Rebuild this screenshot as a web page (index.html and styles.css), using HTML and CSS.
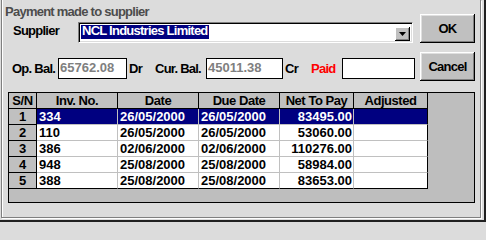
FILE: index.html
```html
<!DOCTYPE html>
<html>
<head>
<meta charset="utf-8">
<link rel="stylesheet" href="styles.css">
</head>
<body>
<div class="outer">
  <div class="frame">
    <div class="top">
      <div class="fields">
        <div class="title">Payment made to supplier</div>
        <div class="sup-row">
          <div class="lbl sup-lbl">Supplier</div>
          <div class="combo">
            <span class="sel">NCL Industries Limited</span>
            <span class="drop"><svg width="7" height="4" viewBox="0 0 7 4"><polygon points="0,0 7,0 3.5,4" fill="#000"/></svg></span>
          </div>
        </div>
        <div class="bal-row">
          <div class="lbl w-op">Op. Bal.</div>
          <div class="box w-b1">65762.08</div>
          <div class="lbl w-dr">Dr</div>
          <div class="lbl w-cur">Cur. Bal.</div>
          <div class="box w-b2">45011.38</div>
          <div class="lbl w-cr">Cr</div>
          <div class="lbl w-paid">Paid</div>
          <div class="box w-b3"></div>
        </div>
      </div>
      <div class="buttons">
        <div class="btn">OK</div>
        <div class="btn">Cancel</div>
      </div>
    </div>
    <div class="grid">
      <div class="table">
        <div class="hd">S/N</div>
        <div class="hd">Inv. No.</div>
        <div class="hd">Date</div>
        <div class="hd">Due Date</div>
        <div class="hd">Net To Pay</div>
        <div class="hd last">Adjusted</div>

        <div class="sn">1</div>
        <div class="c sel-row">334</div>
        <div class="c sel-row">26/05/2000</div>
        <div class="c sel-row">26/05/2000</div>
        <div class="c num sel-row">83495.00</div>
        <div class="c last sel-row"></div>

        <div class="sn">2</div>
        <div class="c">110</div>
        <div class="c">26/05/2000</div>
        <div class="c">26/05/2000</div>
        <div class="c num">53060.00</div>
        <div class="c last"></div>

        <div class="sn">3</div>
        <div class="c">386</div>
        <div class="c">02/06/2000</div>
        <div class="c">02/06/2000</div>
        <div class="c num">110276.00</div>
        <div class="c last"></div>

        <div class="sn">4</div>
        <div class="c">948</div>
        <div class="c">25/08/2000</div>
        <div class="c">25/08/2000</div>
        <div class="c num">58984.00</div>
        <div class="c last"></div>

        <div class="sn bot">5</div>
        <div class="c bot">388</div>
        <div class="c bot">25/08/2000</div>
        <div class="c bot">25/08/2000</div>
        <div class="c num bot">83653.00</div>
        <div class="c last bot"></div>
      </div>
    </div>
  </div>
</div>
</body>
</html>
```

FILE: styles.css
```css
html, body {
  margin: 0;
  padding: 0;
}
body {
  width: 486px;
  height: 223px;
  overflow: hidden;
  background: #dcdcdc;
  font-family: "Liberation Sans", Arial, sans-serif;
  font-size: 13px;
  font-weight: bold;
  line-height: 15px;
  color: #000;
}
.outer {
  width: 484px;
  height: 220px;
  border-right: 2px solid #202020;
  border-bottom: 2px solid #202020;
}
.frame {
  margin-left: 1px;
  width: 478px;
  height: 217px;
  border-left: 1px solid #808080;
  border-right: 1px solid #808080;
  border-bottom: 1px solid #808080;
  box-shadow: inset 1px 0 #fff, 1px 1px #fff;
}
.top {
  display: flex;
  align-items: flex-start;
}
.fields {
  width: 418px;
}
.title {
  margin-top: 4px;
  padding-left: 3px;
  color: #4c4c4c;
  letter-spacing: -0.75px;
}
.sup-row {
  display: flex;
  margin-top: 3px;
  padding-left: 11px;
}
.lbl {
  letter-spacing: -0.75px;
  white-space: nowrap;
}
.sup-lbl {
  width: 65px;
  margin-top: 1px;
}
.combo {
  box-sizing: border-box;
  width: 335px;
  height: 21px;
  padding: 1px;
  display: flex;
  justify-content: space-between;
  background: #fff;
  border-top: 1px solid #808080;
  border-left: 1px solid #808080;
  border-right: 1px solid #fff;
  border-bottom: 1px solid #fff;
  box-shadow: inset 1px 1px #000, inset -1px -1px #dcdcdc;
}
.sel {
  margin: 1px 0 0 1px;
  height: 14px;
  line-height: 12px;
  padding: 0 1px;
  background: #000080;
  color: #fff;
  letter-spacing: -0.75px;
  white-space: nowrap;
}
.drop {
  align-self: flex-end;
  box-sizing: border-box;
  width: 15px;
  height: 14px;
  margin-right: 1px;
  background: #c0c0c0;
  display: flex;
  align-items: center;
  justify-content: center;
  box-shadow: inset -1px -1px #000, inset 1px 1px #fff, inset -2px -2px #808080;
}
.drop svg {
  display: block;
  margin-top: -1px;
}
.bal-row {
  display: flex;
  align-items: center;
  margin-top: 15px;
  padding-left: 10px;
  height: 21px;
}
.box {
  box-sizing: border-box;
  height: 21px;
  border: 1px solid #000;
  background: #fff;
  color: #808080;
  line-height: 18px;
  padding-left: 1px;
}
.w-op { width: 46px; }
.w-b1 { width: 69px; }
.w-dr { width: 26px; padding-left: 2px; }
.w-cur { width: 51px; }
.w-b2 { width: 77px; }
.w-cr { width: 26px; padding-left: 2px; }
.w-paid { width: 31px; color: #ff0000; }
.w-b3 { width: 73px; }
.buttons {
  display: flex;
  flex-direction: column;
  gap: 9px;
  margin-top: 14px;
  width: 55px;
}
.btn {
  height: 29px;
  display: flex;
  align-items: center;
  justify-content: center;
  background: #c0c0c0;
  letter-spacing: -0.75px;
  box-shadow: inset -1px -1px #000, inset 1px 1px #fff, inset -2px -2px #808080, inset 2px 2px #dfdfdf;
}
.grid {
  box-sizing: border-box;
  margin-top: 11px;
  margin-left: 6px;
  width: 467px;
  height: 111px;
  border: 1px solid #000;
  background: #bebebe;
}
.table {
  display: grid;
  grid-template-columns: 28px 81px 81px 81px 74px 74px;
  grid-auto-rows: 16px;
  width: 419px;
}
.table > div {
  box-sizing: border-box;
  white-space: nowrap;
  overflow: hidden;
}
.hd {
  background: #c0c0c0;
  border-right: 1px solid #000;
  border-bottom: 1px solid #000;
  text-align: center;
  letter-spacing: -0.45px;
}
.sn {
  background: #c0c0c0;
  border-right: 1px solid #000;
  border-bottom: 1px solid #000;
  text-align: center;
}
.c {
  background: #fff;
  border-right: 1px solid #c0c0c0;
  border-bottom: 1px solid #c0c0c0;
  padding-left: 2px;
}
.c.num {
  text-align: right;
  padding-left: 0;
  padding-right: 1px;
}
.c.last,
.hd.last {
  border-right-color: #000;
}
.c.bot,
.sn.bot {
  border-bottom-color: #000;
}
.sel-row {
  background: #000080;
  color: #fff;
}
```
